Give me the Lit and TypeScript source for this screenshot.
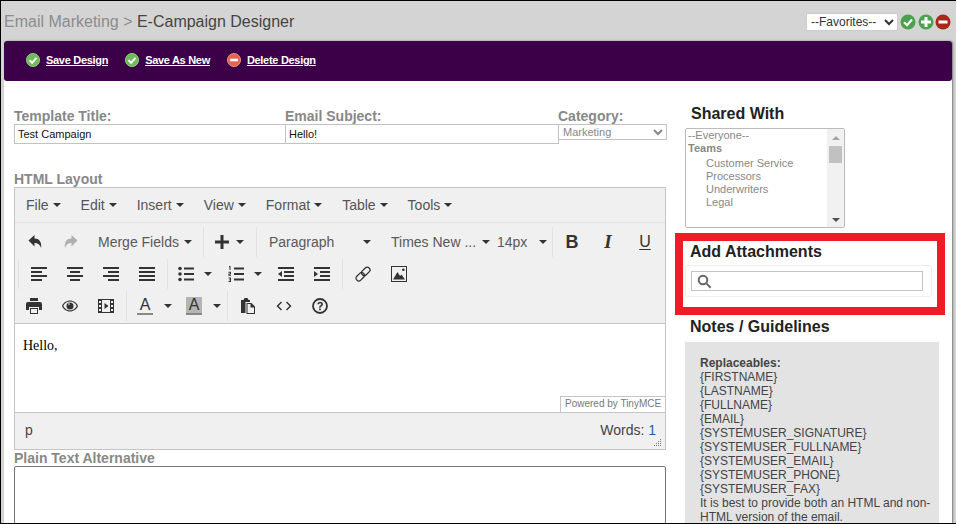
import { LitElement, html, css, svg } from "lit";
import { customElement } from "lit/decorators.js";

const ic = (body: unknown, w = 16, h = 16) =>
  html`<svg class="ic" width=${w} height=${h} viewBox="0 0 ${w} ${h}" fill="currentColor">${body}</svg>`;

const lines = (rows: [number, number][]) =>
  rows.map(([x, w], i) => svg`<rect x=${x} y=${1 + i * 4} width=${w} height="2"/>`);

const I = {
  undo: ic(svg`<path d="M1.5 6.5 7.5 1v3.4c4.6 0 7.4 3.2 6.6 9.6-1-3.4-3.2-5-6.6-5V12.5z"/>`),
  redo: ic(svg`<path d="M14.5 6.5 8.5 1v3.4C3.900 4.400 1.100 7.600 1.900 14c1-3.400 3.200-5 6.600-5V12.500z"/>`),
  plus: ic(svg`<path d="M6.500 1h3v5.500H15v3H9.500V15h-3V9.500H1v-3h5.500z"/>`),
  left: ic(lines([[0, 16], [0, 11], [0, 16], [0, 11]])),
  center: ic(lines([[0, 16], [3, 10], [0, 16], [3, 10]])),
  right: ic(lines([[0, 16], [5, 11], [0, 16], [5, 11]])),
  justify: ic(lines([[0, 16], [0, 16], [0, 16], [0, 16]])),
  bullets: ic(svg`<circle cx="2" cy="2.500" r="1.800"/><circle cx="2" cy="8" r="1.800"/><circle cx="2" cy="13.500" r="1.800"/><rect x="6" y="1.500" width="10" height="2"/><rect x="6" y="7" width="10" height="2"/><rect x="6" y="12.500" width="10" height="2"/>`),
  numbers: ic(svg`<path d="M1 0h1.500v4H1.500V1H1zM.5 5.800h2.500v2.700H1.500v.7H3V10H.5V7.500h1.500v-.8H.5zM.5 11.500H3V16H.5v-.9h1.500v-.9H1v-.7h1v-1H.5z"/><rect x="6" y="1.500" width="10" height="2"/><rect x="6" y="7" width="10" height="2"/><rect x="6" y="12.500" width="10" height="2"/>`),
  outdent: ic(svg`<rect x="0" y="1" width="16" height="2"/><rect x="6" y="5" width="10" height="2"/><rect x="6" y="9" width="10" height="2"/><rect x="0" y="13" width="16" height="2"/><path d="M4 5v6L0 8z"/>`),
  indent: ic(svg`<rect x="0" y="1" width="16" height="2"/><rect x="6" y="5" width="10" height="2"/><rect x="6" y="9" width="10" height="2"/><rect x="0" y="13" width="16" height="2"/><path d="M0 5v6l4-3z"/>`),
  link: ic(svg`<g fill="none" stroke="currentColor" stroke-width="1.300"><rect x="8" y=".6" width="5.500" height="9.500" rx="2.700" transform="rotate(45 10.750 5.350)"/><rect x="2.500" y="6" width="5.500" height="9.500" rx="2.700" transform="rotate(45 5.250 10.750)"/></g>`),
  image: ic(svg`<path fill-rule="evenodd" d="M0 0h16v16H0zM1 1v14h14V1z"/><path d="M2 13.500 6.500 6 9 10l1.500-1.500 3.500 5z"/><circle cx="12.300" cy="3.800" r="1.300"/>`),
  print: ic(svg`<path d="M4 0h8v3H4zM2 4h12a2 2 0 0 1 2 2v6h-3V9H3v3H0V6a2 2 0 0 1 2-2z"/><path fill-rule="evenodd" d="M4 10h8v6H4zM5 11v4h6v-4z"/>`),
  eye: ic(svg`<path fill-rule="evenodd" d="M8 2.500c3.600 0 6.600 2.300 8 5.500-1.400 3.200-4.400 5.500-8 5.500S1.400 11.200 0 8c1.400-3.200 4.400-5.500 8-5.500zM1.300 8c1.300 2.600 3.700 4.400 6.700 4.400s5.400-1.800 6.700-4.400C13.400 5.400 11 3.600 8 3.600S2.600 5.400 1.300 8z"/><path fill-rule="evenodd" d="M8 4.500a3.500 3.500 0 1 1 0 7 3.500 3.500 0 0 1 0-7zM6 6.500h2v-1H6z"/>`),
  film: ic(svg`<path fill-rule="evenodd" d="M0 1h16v14H0zM4 2v12h8V2zM1 3v2h2V3zM1 7v2h2V7zM1 11v2h2v-2zM13 3v2h2V3zM13 7v2h2V7zM13 11v2h2v-2z"/><path d="M6.500 5v6l4-3z"/>`),
  paste: ic(svg`<path d="M4.500 0h3l1 2H10v2H5.500v11H1V2h2.500z"/><path fill-rule="evenodd" d="M6.500 5h5L15 8.500V16H6.500zM7.500 6v9H14V9.500h-3.500V6z"/>`),
  code: ic(svg`<path d="M5 3.500 6 4.500 2.500 8 6 11.500 5 12.500.5 8zM11 3.500 10 4.500 13.500 8 10 11.500 11 12.500 15.500 8z"/>`),
  help: ic(svg`<circle cx="8" cy="8" r="7" fill="none" stroke="currentColor" stroke-width="1.800"/><path d="M5.300 6.300C5.400 4.600 6.600 3.700 8.200 3.700c1.600 0 2.800.9 2.800 2.400 0 1.200-.7 1.800-1.500 2.300-.6.400-.8.600-.8 1.300H7.100c0-1.200.4-1.700 1.100-2.200.6-.4 1-.7 1-1.300 0-.6-.4-1-1-1-.7 0-1.100.4-1.200 1.100zM7.100 10.500h1.700v1.700H7.100z"/>`),
  search: ic(svg`<circle cx="6" cy="6" r="4.300" fill="none" stroke="currentColor" stroke-width="2"/><path d="M9 10.200 10.300 9l4 4-1.300 1.400z"/>`, 15, 15),
};

const badge = (cls: string, glyph: unknown, size: number) =>
  html`<svg class="badge ${cls}" width=${size} height=${size} viewBox="0 0 16 16"><circle cx="8" cy="8" r="7.500" class="disc"/>${glyph}</svg>`;
const check = svg`<path d="M4 8.300 7 11.200 12 5.500" fill="none" stroke="#fff" stroke-width="2.200"/>`;
const minus = svg`<rect x="3.500" y="6.500" width="9" height="3" fill="#fff"/>`;
const cross = svg`<path d="M6.500 3h3v3.500H13v3H9.500V13h-3V9.500H3v-3h3.500z" fill="#fff"/>`;

@customElement("app-root")
export class AppRoot extends LitElement {
  static styles = css`
    :host {
      display: block;
      width: 957px;
      height: 524px;
      overflow: hidden;
      font-family: "Liberation Sans", Arial, sans-serif;
      background: #fff;
    }
    * { box-sizing: border-box; }
    .frame {
      height: 524px;
      border-top: 1px solid #000;
      border-left: 1px solid #000;
      border-bottom: 1px solid #000;
      margin-right: 1px;
      background: #d4d4d4;
      display: flex;
      flex-direction: column;
      overflow: hidden;
    }
    .top {
      height: 40px;
      flex: none;
      display: flex;
      align-items: center;
      justify-content: space-between;
      padding: 0 5px 0 3px;
    }
    .crumb { font-size: 16px; color: #444; padding-top: 1px; }
    .crumb span { color: #8c8c8c; }
    .fav { display: flex; align-items: center; gap: 1.500px; padding-top: 1px; }
    .fav select {
      width: 92px;
      height: 18px;
      margin-right: .5px;
      font: 12px "Liberation Sans", Arial, sans-serif;
      color: #333;
      background: #fff;
      border: 1px solid #ccc;
      border-radius: 0;
      padding: 0;
    }
    .panel {
      flex: 1;
      min-height: 0;
      margin: 0 4px 0 3px;
      background: #fff;
      border-radius: 3px 3px 0 0;
      box-shadow: 1px 0 2px #777;
      display: flex;
      flex-direction: column;
    }
    .bar {
      height: 40px;
      flex: none;
      background: #3c0049;
      border-radius: 3px;
      display: flex;
      align-items: center;
      padding: 0 0 2px 22px;
      gap: 17px;
    }
    .action { display: flex; align-items: center; gap: 6px; color: #fff; font-size: 11px; font-weight: 700; letter-spacing: -.3px; }
    .action u { text-underline-offset: 1px; }
    .g .disc { fill: #6dbb5a; stroke: #9ad48c; stroke-width: 1; }
    .r .disc { fill: #e4644e; stroke: #f09a88; stroke-width: 1; }
    .g2 .disc { fill: #4ba14c; }
    .r2 .disc { fill: #a8281a; }
    .badge { display: block; flex: none; }

    .content { display: flex; flex: 1; min-height: 0; overflow: hidden; }
    .left { width: 671px; flex: none; padding: 27px 0 0 10px; }
    .right { width: 270px; flex: none; padding-top: 24px; }

    .label { font-size: 14px; line-height: 16px; font-weight: 700; color: #888; height: 16px; }
    .fields { display: flex; align-items: flex-start; }
    .field { display: flex; flex-direction: column; }
    .f1 { width: 271px; }
    .f2 { width: 273px; }
    .f3 { width: 109px; }
    .text {
      height: 20px;
      border: 1px solid #c2c2c2;
      font-size: 11px;
      line-height: 18px;
      padding-left: 3px;
      color: #111;
      background: #fff;
      margin-right: -1px;
    }
    .f3 select {
      width: 109px;
      height: 16px;
      border: 1px solid #c2c2c2;
      border-radius: 0;
      background: #fff;
      opacity: 1;
      color: #888;
      font: 11px "Liberation Sans", Arial, sans-serif;
      padding: 0;
    }

    .htitle { margin-top: 27px; }
    .editor {
      width: 652px;
      height: 263px;
      border: 1px solid #c5c5c5;
      background: #f0f0f0;
      color: #333;
      display: flex;
      flex-direction: column;
    }
    .menu {
      height: 35px;
      flex: none;
      display: flex;
      align-items: center;
      gap: 20px;
      padding-left: 11px;
      font-size: 14px;
      color: #555;
      border-bottom: 1px solid #e2e2e2;
    }
    .menu span, .tool { display: inline-flex; align-items: center; }
    .caret {
      display: inline-block;
      width: 0;
      height: 0;
      border: 4px solid transparent;
      border-top-color: #333;
      border-bottom: 0;
      flex: none;
    }
    .menu .caret { margin-left: 4px; }
    .tools { height: 100px; flex: none; padding-top: 3px; }
    .row { height: 32px; display: flex; align-items: center; }
    .r1 { padding-left: 2px; }
    .r2x { padding-left: 3px; }
    .r3 { padding-left: 1px; }
    .sep { width: 1px; height: 30px; background: #e2e2e2; flex: none; }
    .tool { height: 28px; justify-content: center; flex: none; color: #333; font-size: 14px; }
    .ic { display: block; flex: none; }
    .b { width: 36px; }
    .off { color: #b0b0b0; }
    .txt { color: #595959; justify-content: flex-start; }
    .merge { width: 114px; padding-left: 9px; }
    .merge .caret { margin-left: 5px; }
    .plus { width: 52px; justify-content: flex-start; padding-left: 10px; }
    .plus .caret { margin-left: 6px; }
    .para { width: 123px; padding-left: 12px; justify-content: space-between; padding-right: 9px; }
    .font { width: 112px; padding-left: 11px; justify-content: space-between; padding-right: 2px; }
    .size { width: 60px; padding-left: 5px; justify-content: space-between; padding-right: 5px; }
    .m2 { margin-left: 2px; }
    .bold { font-size: 18px; font-weight: 700; }
    .ital { font: italic 700 19px "Liberation Serif", serif; }
    .under { font-size: 16px; text-decoration: underline; text-underline-offset: 2px; }
    .split { width: 50px; justify-content: flex-start; padding-left: 10px; }
    .split .caret { margin-left: 10px; }
    .col { width: 49px; justify-content: flex-start; padding-left: 10px; }
    .col .caret { margin-left: 11px; }
    .letter { width: 16px; height: 18px; border-bottom: 2px solid #888; font-size: 16px; line-height: 16px; text-align: center; display: block; flex: none; }
    .back { background: #b4b4b4; }
    .m1 { margin-left: 1px; }

    .body {
      flex: 1;
      background: #fff;
      border-top: 1px solid #c5c5c5;
      border-bottom: 1px solid #c5c5c5;
      display: flex;
      flex-direction: column;
      justify-content: space-between;
      align-items: flex-start;
      font: 14px "Liberation Serif", "Times New Roman", serif;
      color: #000;
      padding: 14px 0 0 8px;
    }
    .powered {
      align-self: flex-end;
      height: 16px;
      width: 105px;
      background: #fff;
      border: 1px solid #c5c5c5;
      border-width: 1px 0 0 1px;
      font: 10px/14px "Liberation Sans", Arial, sans-serif;
      color: #777;
      padding-left: 4px;
      white-space: nowrap;
    }
    .status {
      height: 36px;
      flex: none;
      display: flex;
      align-items: center;
      justify-content: space-between;
      padding: 0 9px 3px 10px;
      font-size: 14px;
      color: #444;
      position: relative;
    }
    .status b { font-weight: 400; color: #1a5fb4; }
    .grip { position: absolute; right: 3px; bottom: 2px; display: block; }

    .plain {
      width: 652px;
      height: 120px;
      border: 1px solid #767676;
      border-radius: 2px 2px 0 0;
      background: #fff;
    }

    h3 { margin: 0; font-size: 16px; line-height: 18px; font-weight: 700; color: #222; }
    .shared { padding-left: 16px; }
    .list {
      width: 160px;
      height: 100px;
      margin: 5px 0 5px 10px;
      border: 1px solid #bbb;
      border-radius: 2px;
      display: flex;
      background: #fff;
      font-size: 11px;
      line-height: 13px;
      color: #888;
    }
    .opts { flex: 1; padding: 0 0 0 2px; }
    .opts .t { font-weight: 700; }
    .opts .o { padding-left: 18px; }
    .opts .o.first { margin-top: 2px; }
    .scroll {
      width: 17px;
      background: #f1f1f1;
      display: flex;
      flex-direction: column;
      align-items: center;
      justify-content: space-between;
      padding: 7px 0 5px;
      position: relative;
    }
    .tri { width: 0; height: 0; border: 4px solid transparent; border-top: 0; border-bottom: 4px solid #a3a3a3; }
    .tri.d { border-bottom: 0; border-top: 4px solid #505050; }
    .thumb { position: absolute; top: 17px; left: 2px; width: 13px; height: 17px; background: #c1c1c1; }

    .attach { width: 270px; height: 82px; border: 8px solid #ee1c25; background: #fff; padding-top: 2px; }
    .attach h3 { height: 18px; padding-left: 7px; }
    .search-wrap {
      width: 247px;
      height: 32px;
      margin: 4px 0 0 2px;
      border: 1px solid #eee;
      border-radius: 3px;
      padding: 5px;
    }
    .search {
      width: 232px;
      height: 20px;
      border: 1px solid #c4c4c4;
      display: flex;
      align-items: center;
      padding-left: 5px;
      color: #666;
      background: #fff;
    }
    .notes-h { padding: 3px 0 0 15px; }
    .notes {
      width: 254px;
      margin: 6px 0 0 10px;
      background: #e3e3e3;
      padding: 14px 5px 20px 15px;
      font-size: 12px;
      line-height: 14px;
      color: #444;
    }
    .notes strong { display: block; font-weight: 700; }
  `;

  render() {
    const grip = html`<svg class="grip" width="9" height="9" viewBox="0 0 9 9" fill="#777">
      ${[[7, 1], [7, 3], [5, 3], [7, 5], [5, 5], [3, 5], [7, 7], [5, 7], [3, 7], [1, 7]].map(
        ([x, y]) => svg`<rect x=${x} y=${y} width="1" height="1"/>`)}
    </svg>`;
    const c = html`<i class="caret"></i>`;
    return html`
      <div class="frame">
        <div class="top">
          <div class="crumb"><span>Email Marketing &gt; </span>E-Campaign Designer</div>
          <div class="fav">
            <select><option>--Favorites--</option></select>
            ${badge("g2", check, 16)}${badge("g2", cross, 16)}${badge("r2", minus, 16)}
          </div>
        </div>
        <div class="panel">
          <div class="bar">
            <div class="action">${badge("g", check, 14)}<u>Save Design</u></div>
            <div class="action">${badge("g", check, 14)}<u>Save As New</u></div>
            <div class="action">${badge("r", minus, 14)}<u>Delete Design</u></div>
          </div>
          <div class="content">
            <div class="left">
              <div class="fields">
                <div class="field f1"><div class="label">Template Title:</div><div class="text">Test Campaign</div></div>
                <div class="field f2"><div class="label">Email Subject:</div><div class="text">Hello!</div></div>
                <div class="field f3"><div class="label">Category:</div><select disabled><option>Marketing</option></select></div>
              </div>
              <div class="label htitle">HTML Layout</div>
              <div class="editor">
                <div class="menu">
                  ${["File", "Edit", "Insert", "View", "Format", "Table", "Tools"].map(m => html`<span>${m}${c}</span>`)}
                </div>
                <div class="tools">
                  <div class="row r1">
                    <div class="tool b">${I.undo}</div>
                    <div class="tool b off">${I.redo}</div>
                    <div class="tool txt merge">Merge Fields${c}</div>
                    <div class="sep"></div>
                    <div class="tool plus">${I.plus}${c}</div>
                    <div class="sep"></div>
                    <div class="tool txt para">Paragraph${c}</div>
                    <div class="tool txt font">Times New ...${c}</div>
                    <div class="tool txt size">14px${c}</div>
                    <div class="sep"></div>
                    <div class="tool b m1 bold">B</div>
                    <div class="tool b ital">I</div>
                    <div class="tool b m1 under">U</div>
                  </div>
                  <div class="row r2x">
                    <div class="sep"></div>
                    <div class="tool b m2">${I.left}</div>
                    <div class="tool b">${I.center}</div>
                    <div class="tool b">${I.right}</div>
                    <div class="tool b">${I.justify}</div>
                    <div class="sep m2"></div>
                    <div class="tool split">${I.bullets}${c}</div>
                    <div class="tool split">${I.numbers}${c}</div>
                    <div class="tool b">${I.outdent}</div>
                    <div class="tool b">${I.indent}</div>
                    <div class="sep m2"></div>
                    <div class="tool b m2">${I.link}</div>
                    <div class="tool b">${I.image}</div>
                  </div>
                  <div class="row r3">
                    <div class="tool b">${I.print}</div>
                    <div class="tool b">${I.eye}</div>
                    <div class="tool b">${I.film}</div>
                    <div class="sep m2"></div>
                    <div class="tool col"><span class="letter">A</span>${c}</div>
                    <div class="tool col"><span class="letter back">A</span>${c}</div>
                    <div class="sep m2"></div>
                    <div class="tool b m2">${I.paste}</div>
                    <div class="tool b">${I.code}</div>
                    <div class="tool b">${I.help}</div>
                  </div>
                </div>
                <div class="body">
                  <div>Hello,</div>
                  <div class="powered">Powered by TinyMCE</div>
                </div>
                <div class="status"><span>p</span><span>Words: <b>1</b></span>${grip}</div>
              </div>
              <div class="label">Plain Text Alternative</div>
              <div class="plain"></div>
            </div>
            <div class="right">
              <div class="shared"><h3>Shared With</h3></div>
              <div class="list">
                <div class="opts">
                  <div>--Everyone--</div>
                  <div class="t">Teams</div>
                  <div class="o first">Customer Service</div>
                  <div class="o">Processors</div>
                  <div class="o">Underwriters</div>
                  <div class="o">Legal</div>
                </div>
                <div class="scroll"><i class="tri"></i><i class="thumb"></i><i class="tri d"></i></div>
              </div>
              <div class="attach">
                <h3>Add Attachments</h3>
                <div class="search-wrap"><div class="search">${I.search}</div></div>
              </div>
              <div class="notes-h"><h3>Notes / Guidelines</h3></div>
              <div class="notes">
                <strong>Replaceables:</strong>
                {FIRSTNAME}<br />{LASTNAME}<br />{FULLNAME}<br />{EMAIL}<br />{SYSTEMUSER_SIGNATURE}<br />{SYSTEMUSER_FULLNAME}<br />{SYSTEMUSER_EMAIL}<br />{SYSTEMUSER_PHONE}<br />{SYSTEMUSER_FAX}<br />
                It is best to provide both an HTML and non-HTML version of the email.
              </div>
            </div>
          </div>
        </div>
      </div>
    `;
  }
}
